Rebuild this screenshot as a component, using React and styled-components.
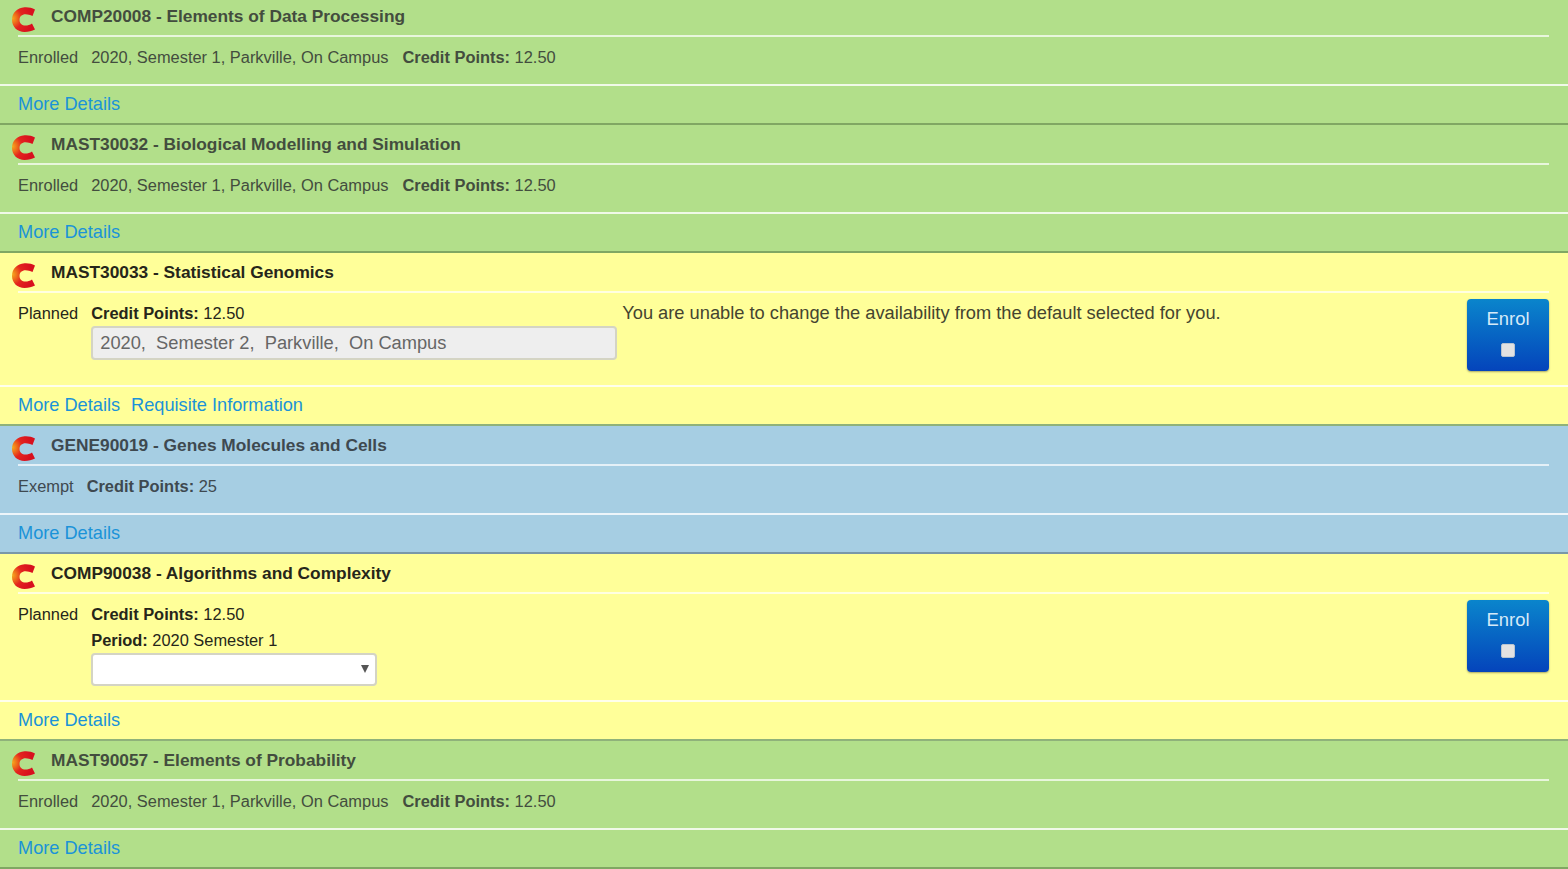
import React from 'react'
import styled, { createGlobalStyle } from 'styled-components'

const GlobalStyle = createGlobalStyle`
    html, body {
        margin: 0;
        padding: 0;
        background: #fff;
        overflow: hidden;
        font-family: "Liberation Sans", Arial, sans-serif;
    }
`

const palette = {
    enrolled: { bg: '#b2df8a', line: '#80a763', text: '#434d3e' },
    planned: { bg: '#ffff99', line: '#8fb27a', text: '#26261a' },
    exempt: { bg: '#a6cee3', line: '#7a98a8', text: '#3e4950' },
}

const Logo = () => (
    <LogoSvg viewBox="0 0 24 26">
        <defs>
            <radialGradient id="cfade" cx="0.02" cy="0.45" r="0.85">
                <stop offset="0" stopColor="#f5a81e" />
                <stop offset="0.25" stopColor="#ee6a1a" />
                <stop offset="0.5" stopColor="#e3241e" />
                <stop offset="1" stopColor="#d8101e" />
            </radialGradient>
        </defs>
        <path
            d="M23 2.5 C20 .8 16 0 12.5 .3 C5 1 0 6 0 13 C0 20 5.5 25 12.5 25 C16.5 25 20 24 23 22.5 L20 16.5 C18 18 15.5 18.5 13.5 18.5 C10 18.5 7.5 16.5 7.5 13 C7.5 9.5 10 7.3 13.5 7.3 C16 7.3 18 8 20.5 9 Z"
            fill="url(#cfade)"
        />
    </LogoSvg>
)

const Subject = ({ kind = 'enrolled', title, status, enrol, links = ['More Details'], children }) => (
    <Row $kind={kind}>
        <Header>
            <Logo />
            <Title>{title}</Title>
        </Header>
        <Body>
            <Status>{status}</Status>
            <Details>{children}</Details>
            {enrol && (
                <EnrolButton>
                    Enrol
                    <EnrolBox type="checkbox" />
                </EnrolButton>
            )}
        </Body>
        <Footer>
            {links.map((l) => (
                <MoreLink key={l} href="#">{l}</MoreLink>
            ))}
        </Footer>
    </Row>
)

const Placement = () => (
    <Line>
        <span>2020, Semester 1, Parkville, On Campus</span>
        <span><b>Credit Points:</b> 12.50</span>
    </Line>
)

const App = () => {
    return (
        <Page>
            <GlobalStyle />
            <Subject title="COMP20008 - Elements of Data Processing" status="Enrolled">
                <Placement />
            </Subject>
            <Subject title="MAST30032 - Biological Modelling and Simulation" status="Enrolled">
                <Placement />
            </Subject>
            <Subject
                kind="planned"
                title="MAST30033 - Statistical Genomics"
                status="Planned"
                enrol
                links={['More Details', 'Requisite Information']}
            >
                <Columns>
                    <div>
                        <Line><span><b>Credit Points:</b> 12.50</span></Line>
                        <LockedInput>2020,&nbsp; Semester 2,&nbsp; Parkville,&nbsp; On Campus</LockedInput>
                    </div>
                    <Notice>You are unable to change the availability from the default selected for you.</Notice>
                </Columns>
            </Subject>
            <Subject kind="exempt" title="GENE90019 - Genes Molecules and Cells" status="Exempt">
                <Line><span><b>Credit Points:</b> 25</span></Line>
            </Subject>
            <Subject kind="planned" title="COMP90038 - Algorithms and Complexity" status="Planned" enrol>
                <Line><span><b>Credit Points:</b> 12.50</span></Line>
                <Line><span><b>Period:</b> 2020 Semester 1</span></Line>
                <PeriodSelect><Arrow /></PeriodSelect>
            </Subject>
            <Subject title="MAST90057 - Elements of Probability" status="Enrolled">
                <Placement />
            </Subject>
        </Page>
    )
}

export default App

const Page = styled.div`
    margin-top: -3px;
    width: 1568px;
`

const Row = styled.section`
    background: ${(p) => palette[p.$kind].bg};
    color: ${(p) => palette[p.$kind].text};
    border-bottom: 2px solid ${(p) => palette[p.$kind].line};
`

const Header = styled.div`
    display: flex;
    align-items: center;
    gap: 15px;
    height: 38px;
    margin: 0 19px 0 18px;
    border-bottom: 2px solid rgba(255, 255, 255, 0.7);
`

const LogoSvg = styled.svg`
    width: 24px;
    height: 26px;
    margin: 7px 0 0 -6px;
    flex: none;
`

const Title = styled.h3`
    margin: 0;
    font-size: 17.32px;
    font-weight: bold;
    line-height: 30px;
`

const Body = styled.div`
    display: flex;
    gap: 13px;
    padding: 7px 19px 14px 18px;
    font-size: 16.42px;
    line-height: 26px;
    border-bottom: 2px solid rgba(255, 255, 255, 0.8);
`

const Status = styled.div`
    flex: none;
`

const Details = styled.div`
    flex: 1;
    min-width: 0;
`

const Line = styled.div`
    display: flex;
    gap: 14px;
`

const Columns = styled.div`
    display: flex;
    gap: 5px;
`

const LockedInput = styled.div`
    box-sizing: border-box;
    width: 526px;
    height: 34px;
    padding: 0 7px;
    margin: 0 0 11px;
    background: #eeeeee;
    border: 2px solid #d4d4c4;
    border-radius: 4px;
    color: #666;
    font-size: 18.27px;
    line-height: 30px;
`

const Notice = styled.div`
    font-size: 18.27px;
    color: #444430;
`

const PeriodSelect = styled.div`
    box-sizing: border-box;
    position: relative;
    width: 286px;
    height: 33px;
    background: #fff;
    border: 2px solid #d4d4c4;
    border-radius: 4px;
`

const Arrow = styled.span`
    position: absolute;
    right: 6px;
    top: 10px;
    width: 0;
    height: 0;
    border-left: 4px solid transparent;
    border-right: 4px solid transparent;
    border-top: 8px solid #555;
`

const EnrolButton = styled.label`
    flex: none;
    box-sizing: border-box;
    width: 82px;
    height: 72px;
    margin-top: -1px;
    padding-top: 7px;
    display: flex;
    flex-direction: column;
    align-items: center;
    gap: 11px;
    color: #d5eaf8;
    font-size: 18.4px;
    line-height: 26px;
    border-radius: 4px;
    background: linear-gradient(to bottom, #0a85cc, #0444bb);
    box-shadow: 0 1px 2px rgba(0, 0, 0, 0.35);
`

const EnrolBox = styled.input`
    appearance: none;
    box-sizing: border-box;
    width: 14px;
    height: 14px;
    margin: 0;
    background: #e2e2e2;
    border: 1px solid #b8c4d0;
    border-radius: 2px;
`

const Footer = styled.div`
    display: flex;
    gap: 11px;
    height: 37px;
    padding-left: 18px;
    align-items: center;
`

const MoreLink = styled.a`
    color: #1b93d8;
    font-size: 18.2px;
    text-decoration: none;
`
